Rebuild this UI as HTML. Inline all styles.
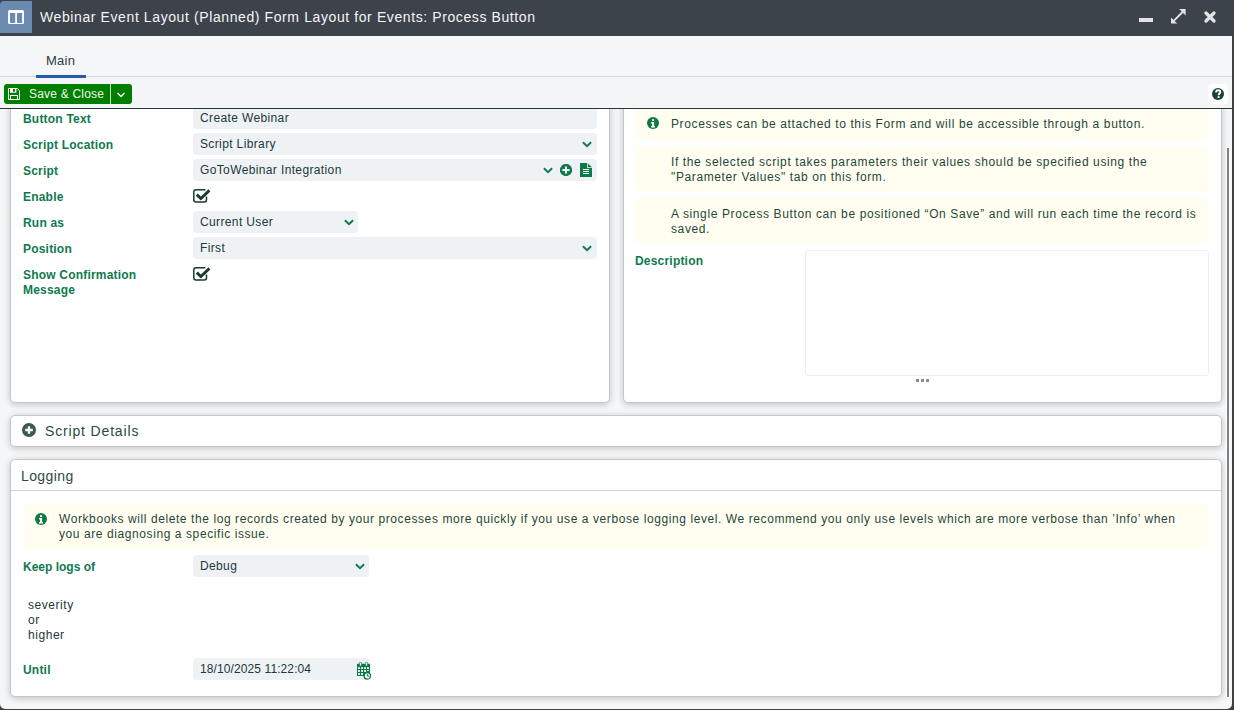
<!DOCTYPE html>
<html><head><meta charset="utf-8">
<style>
*{box-sizing:border-box}
html,body{margin:0;padding:0}
body{width:1234px;height:710px;overflow:hidden;background:#3b4147;position:relative;font-family:"Liberation Sans",sans-serif}
.abs{position:absolute}
#title{left:0;top:0;width:1234px;height:36px;background:#3d434a}
#ticon{left:0;top:1px;width:32px;height:32px;background:#6a8ab0;border-top-left-radius:4px}
#ttext{left:40px;top:0;height:36px;line-height:35px;font-size:14px;color:#f4f5f6;letter-spacing:0.6px;white-space:nowrap}
#win{left:0;top:36px;width:1232px;height:673px;background:#f5f6f8;border-radius:0 0 5px 5px;overflow:hidden}
#tabs{left:0;top:0;width:1232px;height:41px;background:#f5f6f8}
#tabline{left:0;top:40px;width:1232px;height:1px;background:#d3d5d8}
#tabmain{left:46px;top:17px;font-size:13px;color:#333d47;line-height:16px;letter-spacing:0.25px}
#tabul{left:36px;top:39px;width:50px;height:3px;background:#2559ad;z-index:6}
#toolbar{left:0;top:41px;width:1232px;height:31px;background:#f4f5f7;z-index:5}
#tbline{left:0;top:72px;width:1232px;height:1px;background:#1f3b34;z-index:5}
#save{left:4px;top:7px;width:128px;height:20px;background:#007e00;border-radius:3px}
#savesep{left:106px;top:0;width:1px;height:20px;background:#c9dfc9}
#savetxt{left:25px;top:0;line-height:20px;font-size:12px;color:#f2f8f2;letter-spacing:0.2px;white-space:nowrap}
#helpbox{left:1208px;top:7px;width:20px;height:20px;background:#fff;border-radius:4px}
#body{left:0;top:73px;width:1232px;height:600px;overflow:hidden}
.panel{position:absolute;background:#fff;border:1px solid #c6c7c9;border-radius:5px;box-shadow:0 2px 6px rgba(0,0,0,.15),0 0 8px rgba(0,0,0,.07)}
.lbl{position:absolute;font-size:12px;font-weight:700;color:#0f7a4d;letter-spacing:0.2px;white-space:nowrap;line-height:15px}
.inp{position:absolute;height:22px;background:#eff2f5;border-radius:4px;font-size:12px;color:#22383a;letter-spacing:0.37px;line-height:22px;padding-left:7px;white-space:nowrap}
.info{position:absolute;background:#fffef1;border-radius:6px;font-size:12px;color:#1f473a;letter-spacing:0.62px;line-height:15px}
.txt{position:absolute;font-size:12px;color:#22383a;white-space:nowrap;line-height:15px;letter-spacing:0.3px}
</style></head>
<body>
<div id="title" class="abs">
  <div id="ticon" class="abs">
    <svg class="abs" style="left:8px;top:9px" width="16" height="14" viewBox="0 0 16 14"><rect x="0" y="0" width="16" height="14" rx="1.5" fill="#fff"/><rect x="2" y="3" width="5.2" height="9.9" fill="#6a8ab0"/><rect x="9" y="3" width="5.1" height="9.9" fill="#6a8ab0"/></svg>
  </div>
  <div id="ttext" class="abs">Webinar Event Layout (Planned) Form Layout for Events: Process Button</div>
  <div class="abs" style="left:1139px;top:18px;width:14px;height:4px;background:#e1e3e5"></div>
  <svg class="abs" style="left:1170px;top:8px" width="17" height="17" viewBox="0 0 17 17"><path d="M4 12.6 L12.6 4" stroke="#e1e3e5" stroke-width="1.9"/><path d="M9.2 1 H15.6 V7.4 Z" fill="#e1e3e5"/><path d="M1 9.4 V15.6 H7.2 Z" fill="#e1e3e5"/></svg>
  <svg class="abs" style="left:1203px;top:10px" width="14" height="14" viewBox="0 0 14 14"><path d="M3 3 L11 11 M11 3 L3 11" stroke="#e1e3e5" stroke-width="3.3" stroke-linecap="round"/></svg>
</div>
<div id="win" class="abs">
  <div id="tabs" class="abs">
    <div id="tabmain" class="abs">Main</div>
  </div>
  <div id="tabline" class="abs"></div>
  <div id="tabul" class="abs"></div>
  <div id="toolbar" class="abs">
    <div id="save" class="abs">
      <svg class="abs" style="left:4px;top:4px" width="12" height="12" viewBox="0 0 12 12"><path d="M0.5 0.5 H9.3 L11.5 2.7 V11.5 H0.5 Z" fill="none" stroke="#fff" stroke-width="1"/><rect x="2" y="0.5" width="6.4" height="4.2" fill="#fff"/><rect x="5" y="1" width="2" height="2.7" fill="#007e00"/><rect x="2.5" y="7.5" width="7" height="4" fill="none" stroke="#fff" stroke-width="1"/></svg>
      <div id="savetxt" class="abs">Save &amp; Close</div>
      <div id="savesep" class="abs"></div>
      <svg class="abs" style="left:112px;top:7px" width="10" height="8" viewBox="0 0 10 8"><path d="M1.5 2 L5 5.5 L8.5 2" fill="none" stroke="#fff" stroke-width="1.3"/></svg>
    </div>
    <div id="helpbox" class="abs">
      <svg class="abs" style="left:4px;top:4px" width="12" height="12" viewBox="0 0 12 12"><circle cx="6" cy="6" r="6" fill="#1b4035"/><path d="M4.1 4.6 C4.1 3.1 5 2.3 6.2 2.3 C7.5 2.3 8.3 3.1 8.3 4.2 C8.3 5.6 6.6 5.6 6.6 7.2" fill="none" stroke="#fff" stroke-width="1.9"/><rect x="5.6" y="8.2" width="2" height="1.8" fill="#fff"/></svg>
    </div>
  </div>
  <div id="tbline" class="abs"></div>
  <div id="body" class="abs">
    <div class="panel" style="left:10px;top:-60px;width:600px;height:354px">
    </div>
    <div class="lbl" style="left:23px;top:3px">Button Text</div>
    <div class="lbl" style="left:23px;top:29px">Script Location</div>
    <div class="lbl" style="left:23px;top:55px">Script</div>
    <div class="lbl" style="left:23px;top:81px">Enable</div>
    <div class="lbl" style="left:23px;top:107px">Run as</div>
    <div class="lbl" style="left:23px;top:133px">Position</div>
    <div class="lbl" style="left:23px;top:159px">Show Confirmation<br>Message</div>
    <div class="inp" style="left:193px;top:-2px;width:404px">Create Webinar</div>
    <div class="inp" style="left:193px;top:24px;width:404px">Script Library<svg class="abs" style="left:389px;top:8px" width="10" height="7" viewBox="0 0 10 7"><path d="M0.9 1.3 L5 5.2 L9.1 1.3" fill="none" stroke="#0b7a47" stroke-width="1.9"/></svg></div>
    <div class="inp" style="left:193px;top:50px;width:404px">GoToWebinar Integration<svg class="abs" style="left:350px;top:8px" width="10" height="7" viewBox="0 0 10 7"><path d="M0.9 1.3 L5 5.2 L9.1 1.3" fill="none" stroke="#0b7a47" stroke-width="1.9"/></svg>
      <svg class="abs" style="left:367px;top:5px" width="12" height="12" viewBox="0 0 12 12"><circle cx="6" cy="6" r="6.1" fill="#0b7a47"/><path d="M2.4 6 H9.6 M6 2.4 V9.6" stroke="#fff" stroke-width="2"/></svg>
      <svg class="abs" style="left:387px;top:4px" width="13" height="14" viewBox="0 0 13 14"><path d="M0 0 H7.1 V5 H12 V14 H0 Z" fill="#0b7a47"/><path d="M7.9 0.4 L12 4.3 H7.9 Z" fill="#0b7a47"/><rect x="2.9" y="6" width="6.2" height="1" fill="#fff"/><rect x="2.9" y="8" width="6.2" height="1" fill="#fff"/><rect x="2.9" y="10" width="6.2" height="1" fill="#fff"/></svg>
    </div>
    <svg class="abs" style="left:193px;top:80px" width="18" height="16" viewBox="0 0 18 16"><path d="M12.4 0.8 H3 Q0.8 0.8 0.8 3 V10.8 Q0.8 13 3 13 H11.3 Q13.5 13 13.5 10.8 V7.6" fill="none" stroke="#1b3a30" stroke-width="1.5"/><path d="M3.8 5.6 L7.9 9.5 L16.4 1.4" fill="none" stroke="#1b3a30" stroke-width="2.9"/></svg>
    <div class="inp" style="left:193px;top:102px;width:165px">Current User<svg class="abs" style="left:151px;top:8px" width="10" height="7" viewBox="0 0 10 7"><path d="M0.9 1.3 L5 5.2 L9.1 1.3" fill="none" stroke="#0b7a47" stroke-width="1.9"/></svg></div>
    <div class="inp" style="left:193px;top:128px;width:404px">First<svg class="abs" style="left:389px;top:8px" width="10" height="7" viewBox="0 0 10 7"><path d="M0.9 1.3 L5 5.2 L9.1 1.3" fill="none" stroke="#0b7a47" stroke-width="1.9"/></svg></div>
    <svg class="abs" style="left:193px;top:158px" width="18" height="16" viewBox="0 0 18 16"><path d="M12.4 0.8 H3 Q0.8 0.8 0.8 3 V10.8 Q0.8 13 3 13 H11.3 Q13.5 13 13.5 10.8 V7.6" fill="none" stroke="#1b3a30" stroke-width="1.5"/><path d="M3.8 5.6 L7.9 9.5 L16.4 1.4" fill="none" stroke="#1b3a30" stroke-width="2.9"/></svg>

    <div class="panel" style="left:623px;top:-60px;width:599px;height:354px">
    </div>
    <div class="info" style="left:635px;top:-1px;width:574px;height:32px;padding:9px 0 0 36px">Processes can be attached to this Form and will be accessible through a button.</div>
    <svg class="abs" style="left:647px;top:8px" width="12" height="12" viewBox="0 0 12 12"><circle cx="6" cy="6" r="6" fill="#0b7a47"/><rect x="5" y="2.2" width="2.1" height="1.9" fill="#fff"/><path d="M4.1 5 H7.1 V9 H8 V10.6 H4 V9 H5 V6.4 H4.1 Z" fill="#fff"/></svg>
    <div class="info" style="left:635px;top:37px;width:574px;height:46px;padding:9px 0 0 36px">If the selected script takes parameters their values should be specified using the<br>"Parameter Values" tab on this form.</div>
    <div class="info" style="left:635px;top:89px;width:574px;height:46px;padding:9px 0 0 36px">A single Process Button can be positioned “On Save” and will run each time the record is<br>saved.</div>
    <div class="lbl" style="left:635px;top:145px">Description</div>
    <div class="abs" style="left:805px;top:141px;width:404px;height:126px;border:1px solid #edf0f3;border-radius:3px;background:#fff"></div>
    <div class="abs" style="left:916px;top:270px;width:3px;height:3px;background:#8a8a8a"></div>
    <div class="abs" style="left:921px;top:270px;width:3px;height:3px;background:#8a8a8a"></div>
    <div class="abs" style="left:926px;top:270px;width:3px;height:3px;background:#8a8a8a"></div>

    <div class="panel" style="left:10px;top:306px;width:1212px;height:32px">
      <svg class="abs" style="left:11px;top:7px" width="14" height="14" viewBox="0 0 14 14"><circle cx="7" cy="7" r="7" fill="#3a5a50"/><path d="M3.2 7 H10.8 M7 3.2 V10.8" stroke="#fff" stroke-width="2.4"/></svg>
      <div class="abs" style="left:34px;top:7px;font-size:14px;line-height:17px;color:#2b4a3f;letter-spacing:0.84px;white-space:nowrap">Script Details</div>
    </div>

    <div class="panel" style="left:10px;top:350px;width:1212px;height:238px">
      <div class="abs" style="left:10px;top:8px;font-size:14px;line-height:17px;color:#2b4a3f;letter-spacing:0.4px;white-space:nowrap">Logging</div>
      <div class="abs" style="left:0;top:30px;width:1210px;height:1px;background:#cfd1d4"></div>
    </div>
    <div class="info" style="letter-spacing:0.585px;left:23px;top:394px;width:1186px;height:46px;padding:9px 0 0 36px">Workbooks will delete the log records created by your processes more quickly if you use a verbose logging level. We recommend you only use levels which are more verbose than ’Info’ when<br>you are diagnosing a specific issue.</div>
    <svg class="abs" style="left:35px;top:404px" width="12" height="12" viewBox="0 0 12 12"><circle cx="6" cy="6" r="6" fill="#0b7a47"/><rect x="5" y="2.2" width="2.1" height="1.9" fill="#fff"/><path d="M4.1 5 H7.1 V9 H8 V10.6 H4 V9 H5 V6.4 H4.1 Z" fill="#fff"/></svg>
    <div class="lbl" style="left:23px;top:451px;letter-spacing:0">Keep logs of</div>
    <div class="inp" style="left:193px;top:446px;width:176px">Debug<svg class="abs" style="left:162px;top:8px" width="10" height="7" viewBox="0 0 10 7"><path d="M0.9 1.3 L5 5.2 L9.1 1.3" fill="none" stroke="#0b7a47" stroke-width="1.9"/></svg></div>
    <div class="txt" style="left:28px;top:489px;letter-spacing:0.55px">severity<br>or<br>higher</div>
    <div class="lbl" style="left:23px;top:554px">Until</div>
    <div class="inp" style="left:193px;top:549px;width:177px;letter-spacing:0.1px">18/10/2025 11:22:04
      <svg class="abs" style="left:164px;top:4px" width="14" height="18" viewBox="0 0 14 18"><rect x="0" y="1.8" width="13" height="12.2" fill="#0b7a47"/><rect x="1" y="5.2" width="1.9" height="1.8" fill="#fff"/><rect x="1" y="8.1" width="1.9" height="1.8" fill="#fff"/><rect x="1" y="11.1" width="1.9" height="1.8" fill="#fff"/><rect x="4.1" y="5.2" width="1.9" height="1.8" fill="#fff"/><rect x="4.1" y="8.1" width="1.9" height="1.8" fill="#fff"/><rect x="4.1" y="11.1" width="1.9" height="1.8" fill="#fff"/><rect x="7.1" y="5.2" width="1.9" height="1.8" fill="#fff"/><rect x="7.1" y="8.1" width="1.9" height="1.8" fill="#fff"/><rect x="10" y="5.2" width="1.9" height="1.8" fill="#fff"/><rect x="10" y="8.1" width="1.9" height="0.9" fill="#fff"/><rect x="2.4" y="0.2" width="2.2" height="3.8" rx="1" fill="#fff" stroke="#0b7a47" stroke-width="0.8"/><rect x="8.4" y="0.2" width="2.2" height="3.8" rx="1" fill="#fff" stroke="#0b7a47" stroke-width="0.8"/><circle cx="10.4" cy="13.9" r="3.2" fill="#fff" stroke="#0b7a47" stroke-width="1.3"/><path d="M10.6 11.9 V14.2 H12.3" fill="none" stroke="#0b7a47" stroke-width="1"/></svg>
    </div>

  </div>
  <div class="abs" style="left:1226px;top:112px;width:4px;height:550px;background:rgba(255,255,255,.85);border-radius:1px;z-index:4"></div>
  <div class="abs" style="left:1227px;top:112px;width:2px;height:549px;background:#7f7f7f;z-index:4"></div>
</div>
</body></html>
